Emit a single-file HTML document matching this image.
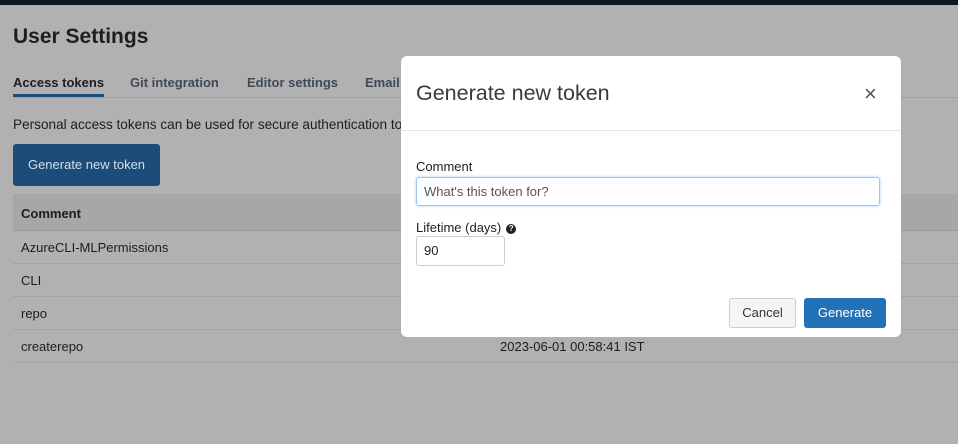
<!DOCTYPE html>
<html><head><meta charset="utf-8"><style>
*{box-sizing:border-box;margin:0;padding:0}
body{width:958px;height:444px;overflow:hidden;background:#b1b1b1;font-family:"Liberation Sans",sans-serif;color:#1d1d1d;position:relative}
.top{position:absolute;left:0;top:0;width:958px;height:5px;background:#0c1a22}
h1{position:absolute;left:13px;top:25px;font-size:21px;font-weight:bold;color:#1e1e1e}
.tabs{position:absolute;left:13px;top:73px;right:0;height:25px;border-bottom:1px solid #9ea1a4;font-size:13px;font-weight:bold}
.tabs span{position:absolute;top:2px;color:#3f4a55}
.tabs .a{color:#1e1e1e;border-bottom:3px solid #1d4d78;padding-bottom:4px}
.p{position:absolute;left:13px;top:117px;font-size:13.6px;color:#1e1e1e;white-space:nowrap}
.btn{position:absolute;left:13px;top:144px;width:147px;height:42px;background:#1c4d7a;border-radius:3px;color:#d6dde4;font-size:13px;line-height:42px;text-align:center}
.th{position:absolute;left:13px;right:0;top:194px;height:37px;background:#a6a7a9;border-bottom:1px solid #959a9e;font-size:13px;font-weight:bold;padding:12px 8px}
.tr{position:absolute;left:13px;right:0;height:33px;border-bottom:1px solid #9da3a8;font-size:13px;padding:9px 8px}
.modal{position:absolute;left:401px;top:56px;width:500px;height:281px;background:#fff;border-radius:6px}
.mh{height:75px;border-bottom:1px solid #e6e6e6;position:relative}
.mh .t{position:absolute;left:15px;top:25px;font-size:21.5px;color:#3a3a3a;font-weight:normal}
.x{position:absolute;left:463px;top:30px;font-size:22px;color:#555;line-height:16px}
.lbl{position:absolute;left:15px;font-size:13px;color:#222}
.in{position:absolute;left:15px;border:1px solid #9bc8f2;border-radius:3px;box-shadow:0 0 3px #a9d3fa;font-size:13px;color:#555;padding:0 7px}
.cb{position:absolute;left:328px;top:242px;width:67px;height:30px;border:1px solid #ccc;border-radius:3px;background:#f5f5f5;font-size:13px;line-height:28px;text-align:center;color:#333}
.gb{position:absolute;left:403px;top:242px;width:82px;height:30px;border-radius:3px;background:#2272b9;color:#fff;font-size:13px;line-height:30px;text-align:center}
.q{display:inline-block;width:10px;height:10px;border-radius:50%;background:#222;color:#fff;font-size:8px;font-weight:bold;line-height:10px;text-align:center;vertical-align:1px;margin-left:5px}
</style></head><body>
<div class="top"></div>
<h1>User Settings</h1>
<div class="tabs"><span class="a" style="left:0">Access tokens</span><span style="left:117px">Git integration</span><span style="left:234px">Editor settings</span><span style="left:352px">Email</span></div>
<div class="p">Personal access tokens can be used for secure authentication to</div>
<div class="btn">Generate new token</div>
<div class="th">Comment</div>
<div class="tr" style="top:231px">AzureCLI-MLPermissions</div>
<div class="tr" style="top:264px">CLI</div>
<div class="tr" style="top:297px">repo</div>
<div class="tr" style="top:330px">createrepo<span style="position:absolute;left:487px">2023-06-01 00:58:41 IST</span></div>
<div class="modal">
<div class="mh"><div class="t">Generate new token</div><div class="x">×</div></div>
<div class="lbl" style="top:103px">Comment</div>
<div class="in" style="top:121px;width:464px;height:29px;line-height:27px;color:#555">What's this token for?</div>
<div class="lbl" style="top:164px">Lifetime (days)<span class="q">?</span></div>
<div class="in" style="top:180px;width:89px;height:30px;line-height:28px;border-color:#ccc;box-shadow:none;color:#222">90</div>
<div class="cb">Cancel</div>
<div class="gb">Generate</div>
</div>
</body></html>
